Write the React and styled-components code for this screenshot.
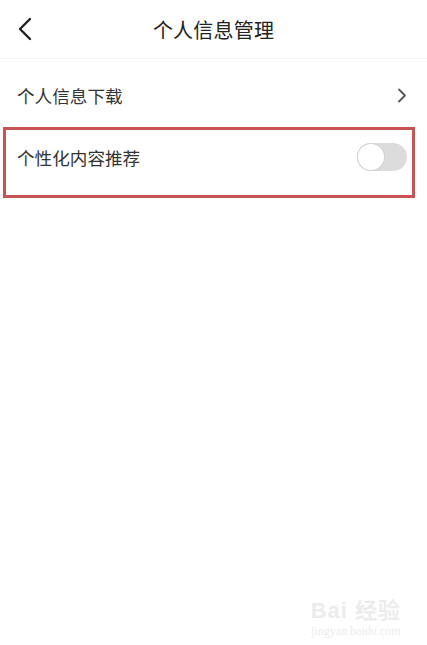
import styled, { createGlobalStyle } from "styled-components";

const GlobalStyle = createGlobalStyle`
  html, body {
    margin: 0;
    padding: 0;
    background: #fff;
    font-family: "Noto Sans CJK SC", "Noto Sans", sans-serif;
  }
`;

const Page = styled.div`
  position: relative;
  width: 427px;
  height: 645px;
  background: #fff;
  overflow: hidden;
`;

const Header = styled.header`
  height: 58px;
  display: flex;
  align-items: center;
  justify-content: center;
  position: relative;
  border-bottom: 1px solid #f4f4f4;
`;

const BackButton = styled.div`
  position: absolute;
  left: 17px;
  top: 17px;
  width: 16px;
  height: 24px;
  display: flex;
`;

const Title = styled.h1`
  margin: 0;
  font-size: 20px;
  font-weight: 400;
  color: #222;
  letter-spacing: 0.2px;
`;

const Row = styled.div`
  height: ${(p) => p.height}px;
  padding: ${(p) => p.pad || "0 20px 0 17px"};
  box-sizing: border-box;
  display: flex;
  align-items: center;
  justify-content: space-between;
`;

const Label = styled.span`
  font-size: 17.6px;
  color: #333;
`;

const Highlight = styled.div`
  margin: 0 12px 0 3px;
  border: 3px solid #c75452;
  padding-bottom: 11px;
`;

const Toggle = styled.div`
  width: 50px;
  height: 28px;
  border-radius: 14px;
  background: #dcdcdc;
  position: relative;
  margin-right: 5px;

  &::after {
    content: "";
    position: absolute;
    left: 1px;
    top: 1px;
    width: 26px;
    height: 26px;
    border-radius: 50%;
    background: #fff;
    box-shadow: 0 0 0 1px #d2d2d2;
  }
`;

const Watermark = styled.div`
  position: absolute;
  right: 26px;
  bottom: 6px;
  display: flex;
  flex-direction: column;
  align-items: center;
  color: #ececec;
  font-family: "Liberation Sans", "Noto Sans CJK SC", sans-serif;
`;

const MarkTop = styled.div`
  font-size: 22px;
  font-weight: bold;
  letter-spacing: 1px;
`;

const MarkBottom = styled.div`
  font-size: 12px;
  font-family: "Liberation Serif", serif;
`;

function App() {
  return (
    <>
      <GlobalStyle />
      <Page>
        <Header>
          <BackButton>
            <svg width="16" height="24" viewBox="0 0 16 24">
              <path d="M13 2 L3 12 L13 22" fill="none" stroke="#222" strokeWidth="2.4" strokeLinecap="round" strokeLinejoin="round" />
            </svg>
          </BackButton>
          <Title>个人信息管理</Title>
        </Header>
        <Row height={68} pad="4px 20px 0 17px">
          <Label>个人信息下载</Label>
          <svg width="10" height="15" viewBox="0 0 10 15">
            <path d="M2 1.5 L8 7.5 L2 13.5" fill="none" stroke="#555" strokeWidth="1.8" strokeLinecap="round" strokeLinejoin="round" />
          </svg>
        </Row>
        <Highlight>
          <Row height={54} pad="0 0 0 11px">
            <Label>个性化内容推荐</Label>
            <Toggle />
          </Row>
        </Highlight>
        <Watermark>
          <MarkTop>Bai 经验</MarkTop>
          <MarkBottom>jingyan.baidu.com</MarkBottom>
        </Watermark>
      </Page>
    </>
  );
}

export default App;
